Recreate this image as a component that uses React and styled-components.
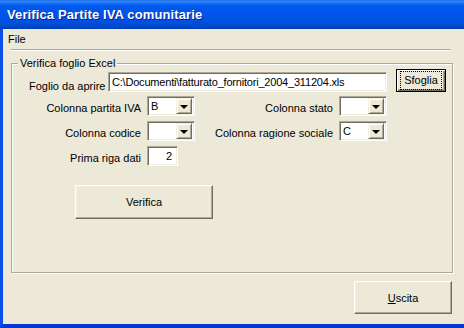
import React from "react";
import styled, { createGlobalStyle } from "styled-components";

const GlobalStyle = createGlobalStyle`
  html, body {
    margin: 0;
    padding: 0;
    background: #ece9d8;
  }
  body {
    font-family: "Liberation Sans", Arial, sans-serif;
    font-size: 11px;
    color: #000;
  }
`;

const Window = styled.div`
  width: 464px;
  height: 328px;
  display: flex;
  flex-direction: column;
  overflow: hidden;
`;

const TitleBar = styled.div`
  height: 29px;
  flex: none;
  display: flex;
  align-items: center;
  padding: 0 0 1px 7px;
  box-sizing: border-box;
  background: linear-gradient(
    to bottom,
    #0a5fd8 0px,
    #3a8cf8 1px,
    #1872f4 3px,
    #0058ee 6px,
    #0054e6 60%,
    #004ed8 85%,
    #003cb4 100%
  );
  color: #fff;
  font: bold 13px "Liberation Sans", Arial, sans-serif;
  letter-spacing: 0.12px;
  text-shadow: 1px 1px 0 #0a1f8a;
`;

const Frame = styled.div`
  flex: 1;
  display: flex;
  flex-direction: column;
  border-left: 3px solid #0b50e8;
  border-bottom: 4px solid #0836d0;
  background: #ece9d8;
`;

const MenuBar = styled.div`
  height: 20px;
  display: flex;
  align-items: center;
  padding-left: 5px;
`;

const MenuItem = styled.span`
  line-height: 13px;
`;

const Separator = styled.div`
  height: 1px;
  margin: 0 13px 0 8px;
  background: #aca899;
  border-bottom: 1px solid #fff;
`;

const Group = styled.fieldset`
  box-sizing: border-box;
  width: 442px;
  height: 216px;
  margin: 6px 0 0 8px;
  padding: 0;
  min-width: 0;
  border: 1px solid #aca899;
  box-shadow: inset 1px 1px 0 #fff, 1px 1px 0 #fff;
`;

const Legend = styled.legend`
  margin-left: 6px;
  padding: 0 2px;
  line-height: 13px;
  background: #ece9d8;
`;

const FileRow = styled.div`
  display: flex;
  align-items: flex-start;
  margin-top: -1px;
  padding-left: 17px;
  height: 23px;
`;

const Label = styled.span`
  line-height: 13px;
  white-space: nowrap;
`;

const FileLabel = styled(Label)`
  width: 79px;
  padding-top: 11px;
`;

const Field = styled.div`
  box-sizing: border-box;
  height: 20px;
  width: ${(p) => p.$w}px;
  display: flex;
  align-items: center;
  justify-content: ${(p) => (p.$right ? "flex-end" : "flex-start")};
  padding: 0 ${(p) => (p.$right ? 5 : 2)}px 0 3px;
  background: #fff;
  border: 1px solid;
  border-color: #aca899 #fff #fff #aca899;
  box-shadow: inset 1px 1px 0 #716f64, inset -1px -1px 0 #f1efe2;
  white-space: nowrap;
  overflow: hidden;
`;

const PathField = styled(Field)`
  margin-top: 3px;
  letter-spacing: -0.2px;
`;

const Button = styled.button`
  box-sizing: border-box;
  width: ${(p) => p.$w}px;
  height: ${(p) => p.$h}px;
  margin: 0;
  padding: 0;
  background: #ece9d8;
  font: 11px "Liberation Sans", Arial, sans-serif;
  color: #000;
  border: 1px solid;
  border-color: ${(p) =>
    p.$default ? "#000" : "#fff #716f64 #716f64 #fff"};
  box-shadow: ${(p) =>
    p.$default
      ? "inset 1px 1px 0 #fff, inset -1px -1px 0 #716f64, inset -2px -2px 0 #aca899"
      : "inset -1px -1px 0 #aca899, inset 1px 1px 0 #f1efe2"};
  display: flex;
  align-items: center;
  justify-content: center;
`;

const BrowseButton = styled(Button)`
  margin-left: 9px;
`;

const FocusRing = styled.span`
  padding: 2px 3px;
  outline: 1px dotted #000;
  outline-offset: 0;
  line-height: 13px;
`;

const Grid = styled.div`
  display: grid;
  grid-template-columns: 129px 48px 132px 48px;
  grid-auto-rows: 20px;
  column-gap: 6px;
  row-gap: 5px;
  margin-top: 4px;
`;

const GridLabel = styled(Label)`
  text-align: right;
  align-self: end;
  padding-bottom: ${(p) => p.$drop ?? 0}px;
`;

const ComboBox = styled(Field)`
  padding: 0 2px 0 3px;
  justify-content: space-between;
`;

const DropButton = styled.span`
  box-sizing: border-box;
  width: 16px;
  height: 16px;
  flex: none;
  display: flex;
  align-items: center;
  justify-content: center;
  background: #ece9d8;
  border: 1px solid;
  border-color: #f1efe2 #716f64 #716f64 #f1efe2;
  box-shadow: inset 1px 1px 0 #fff, inset -1px -1px 0 #aca899;
  &::after {
    content: "";
    border-left: 4px solid transparent;
    border-right: 4px solid transparent;
    border-top: 4px solid #000;
    margin-top: 1px;
  }
`;

const Empty = styled.span``;

const VerifyButton = styled(Button)`
  margin: 19px 0 0 63px;
`;

const Footer = styled.div`
  display: flex;
  justify-content: flex-end;
  padding: 8px 12px 0 0;
`;

const Access = styled.span`
  text-decoration: underline;
`;

function Combo({ value }) {
  return (
    <ComboBox $w={48}>
      <span>{value}</span>
      <DropButton />
    </ComboBox>
  );
}

export default function App() {
  return (
    <>
      <GlobalStyle />
      <Window>
        <TitleBar>Verifica Partite IVA comunitarie</TitleBar>
        <Frame>
          <MenuBar>
            <MenuItem>File</MenuItem>
          </MenuBar>
          <Separator />
          <Group>
            <Legend>Verifica foglio Excel</Legend>
            <FileRow>
              <FileLabel>Foglio da aprire</FileLabel>
              <PathField $w={279}>
                C:\Documenti\fatturato_fornitori_2004_311204.xls
              </PathField>
              <BrowseButton $w={50} $h={23} $default>
                <FocusRing>Sfoglia</FocusRing>
              </BrowseButton>
            </FileRow>
            <Grid>
              <GridLabel $drop={1}>Colonna partita IVA</GridLabel>
              <Combo value="B" />
              <GridLabel $drop={1}>Colonna stato</GridLabel>
              <Combo value="" />
              <GridLabel $drop={1}>Colonna codice</GridLabel>
              <Combo value="" />
              <GridLabel $drop={1}>Colonna ragione sociale</GridLabel>
              <Combo value="C" />
              <GridLabel $drop={1}>Prima riga dati</GridLabel>
              <Field $w={31} $right>
                2
              </Field>
              <Empty />
              <Empty />
            </Grid>
            <VerifyButton $w={138} $h={34}>
              Verifica
            </VerifyButton>
          </Group>
          <Footer>
            <Button $w={98} $h={33}>
              <span>
                <Access>U</Access>scita
              </span>
            </Button>
          </Footer>
        </Frame>
      </Window>
    </>
  );
}
